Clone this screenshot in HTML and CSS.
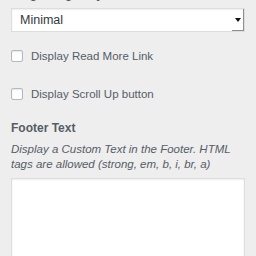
FILE: index.html
```html
<!DOCTYPE html>
<html lang="en">
<head>
    <meta charset="UTF-8">
    <meta name="viewport" content="width=device-width, initial-scale=1.0">
    <title>Theme Options</title>
    <link rel="stylesheet" href="styles.css">
</head>
<body>
    <div class="panel">
        <!-- Layout select -->
        <div class="control">
            <span class="control-title top-title">Single Page Layout</span>
            <div class="select">
                <span class="select-value">Minimal</span>
                <span class="select-button"><span class="select-arrow"></span></span>
            </div>
        </div>

        <!-- Checkboxes -->
        <label class="check-row first-check">
            <span class="checkbox"></span>
            <span class="check-label">Display Read More Link</span>
        </label>
        <label class="check-row">
            <span class="checkbox"></span>
            <span class="check-label">Display Scroll Up button</span>
        </label>

        <!-- Footer text -->
        <div class="control footer-control">
            <span class="control-title">Footer Text</span>
            <span class="description">Display a Custom Text in the Footer. HTML tags are allowed (strong, em, b, i, br, a)</span>
            <div class="textarea"></div>
        </div>
    </div>
</body>
</html>
```

FILE: styles.css
```css
body {
    margin: 0;
    background-color: #eeeeee;
    font-family: "Liberation Sans", Arial, sans-serif;
    color: #555d66;
    overflow: hidden;
}

.panel {
    padding: 0 11px;
    display: flex;
    flex-direction: column;
}

.control {
    display: flex;
    flex-direction: column;
}

.control-title {
    font-size: 12px;
    font-weight: bold;
    line-height: 16px;
}

.top-title {
    margin-top: -14px;
}

/* Fake select box */
.select {
    margin-top: 6px;
    height: 22px;
    border: 1px solid #dddddd;
    background-color: #ffffff;
    box-shadow: inset 0 1px 2px rgba(0, 0, 0, 0.07);
    display: flex;
    align-items: center;
    justify-content: space-between;
}

.select-value {
    padding-left: 8px;
    font-size: 12.5px;
    line-height: 22px;
    color: #32373c;
}

.select-button {
    width: 11px;
    height: 21px;
    align-self: flex-start;
    border-right: 1px solid #8c8f94;
    border-bottom: 1px solid #8c8f94;
    display: flex;
    align-items: center;
    justify-content: center;
}

.select-arrow {
    width: 0;
    height: 0;
    border-left: 3px solid transparent;
    border-right: 3px solid transparent;
    border-top: 4px solid #111111;
}

/* Checkbox rows */
.check-row {
    display: flex;
    align-items: center;
    height: 16px;
    margin-top: 22px;
}

.first-check {
    margin-top: 16px;
}

.checkbox {
    width: 10px;
    height: 10px;
    border: 1px solid #b4b9be;
    border-radius: 2px;
    background-color: #ffffff;
    box-shadow: inset 0 1px 2px rgba(0, 0, 0, 0.1);
    flex-shrink: 0;
}

.check-label {
    margin-left: 8px;
    font-size: 11.5px;
}

/* Footer text */
.footer-control {
    margin-top: 18px;
}

.description {
    margin-top: 6px;
    font-size: 11.5px;
    font-style: italic;
    line-height: 15px;
}

.textarea {
    margin-top: 6px;
    height: 120px;
    border: 1px solid #dddddd;
    background-color: #ffffff;
    box-shadow: inset 0 1px 2px rgba(0, 0, 0, 0.07);
}
```
